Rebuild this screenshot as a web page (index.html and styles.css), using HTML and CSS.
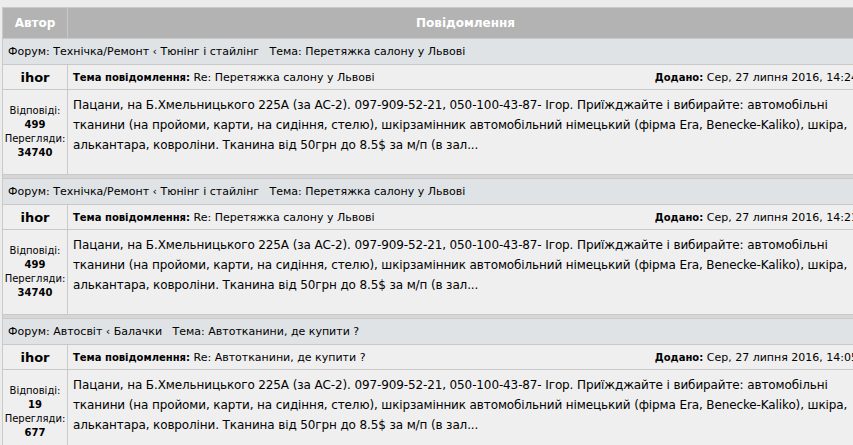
FILE: index.html
```html
<!DOCTYPE html>
<html lang="uk">
<head>
  <meta charset="UTF-8" />
  <title>Пошук</title>
  <link rel="stylesheet" href="styles.css">
</head>
<body>
  <table class="forumline">
    <thead>
      <tr>
        <th class="col-author">Автор</th>
        <th>Повідомлення</th>
      </tr>
    </thead>
    <tbody>
      <tr class="cat">
        <td colspan="2">Форум: Технічка/Ремонт &lsaquo; Тюнінг і стайлінг &nbsp; Тема: Перетяжка салону у Львові</td>
      </tr>
      <tr class="head-row">
        <td class="author">ihor</td>
        <td class="topic">
          <span class="subj"><b>Тема повідомлення:</b> Re: Перетяжка салону у Львові</span>
          <span class="date"><b>Додано:</b> Сер, 27 липня 2016, 14:24</span>
        </td>
      </tr>
      <tr class="body-row">
        <td class="stats">Відповіді:<br><b>499</b><br>Перегляди:<br><b>34740</b></td>
        <td class="message">Пацани, на Б.Хмельницького 225А (за АС-2). 097-909-52-21, 050-100-43-87- Ігор. Приїжджайте і вибирайте: автомобільні тканини (на пройоми, карти, на сидіння, стелю), шкірзамінник автомобільний німецький (фірма Era, Benecke-Kaliko), шкіра, алькантара, ковроліни. Тканина від 50грн до 8.5$ за м/п (в зал...</td>
      </tr>
      <tr class="space"><td colspan="2"></td></tr>

      <tr class="cat">
        <td colspan="2">Форум: Технічка/Ремонт &lsaquo; Тюнінг і стайлінг &nbsp; Тема: Перетяжка салону у Львові</td>
      </tr>
      <tr class="head-row">
        <td class="author">ihor</td>
        <td class="topic">
          <span class="subj"><b>Тема повідомлення:</b> Re: Перетяжка салону у Львові</span>
          <span class="date"><b>Додано:</b> Сер, 27 липня 2016, 14:21</span>
        </td>
      </tr>
      <tr class="body-row">
        <td class="stats">Відповіді:<br><b>499</b><br>Перегляди:<br><b>34740</b></td>
        <td class="message">Пацани, на Б.Хмельницького 225А (за АС-2). 097-909-52-21, 050-100-43-87- Ігор. Приїжджайте і вибирайте: автомобільні тканини (на пройоми, карти, на сидіння, стелю), шкірзамінник автомобільний німецький (фірма Era, Benecke-Kaliko), шкіра, алькантара, ковроліни. Тканина від 50грн до 8.5$ за м/п (в зал...</td>
      </tr>
      <tr class="space"><td colspan="2"></td></tr>

      <tr class="cat">
        <td colspan="2">Форум: Автосвіт &lsaquo; Балачки &nbsp; Тема: Автотканини, де купити ?</td>
      </tr>
      <tr class="head-row">
        <td class="author">ihor</td>
        <td class="topic">
          <span class="subj"><b>Тема повідомлення:</b> Re: Автотканини, де купити ?</span>
          <span class="date"><b>Додано:</b> Сер, 27 липня 2016, 14:05</span>
        </td>
      </tr>
      <tr class="body-row">
        <td class="stats">Відповіді:<br><b>19</b><br>Перегляди:<br><b>677</b></td>
        <td class="message">Пацани, на Б.Хмельницького 225А (за АС-2). 097-909-52-21, 050-100-43-87- Ігор. Приїжджайте і вибирайте: автомобільні тканини (на пройоми, карти, на сидіння, стелю), шкірзамінник автомобільний німецький (фірма Era, Benecke-Kaliko), шкіра, алькантара, ковроліни. Тканина від 50грн до 8.5$ за м/п (в зал...</td>
      </tr>
    </tbody>
  </table>
</body>
</html>
```

FILE: styles.css
```css
html, body {
  margin: 0;
  padding: 0;
}
body {
  background-color: #ececec;
  font-family: "DejaVu Sans", Verdana, sans-serif;
  color: #000;
  overflow: hidden;
  padding: 7px 0 0 3px;
}
.forumline {
  width: 862px;
  border-collapse: separate;
  border-spacing: 1px;
  background-color: #c9c9c9;
  border: 0;
  margin: 0 0 0 -1px;
}
.forumline th {
  background-color: #b3b3b3;
  color: #fff;
  font-size: 12px;
  font-weight: bold;
  height: 30px;
  padding: 0;
  text-align: center;
}
.col-author {
  width: 64px;
}
.cat td {
  background-color: #dfe3e6;
  font-size: 11px;
  height: 25px;
  padding: 0 5px;
  white-space: nowrap;
}
.head-row td {
  background-color: #efefef;
  height: 24px;
  padding: 0 5px;
}
.author {
  text-align: center;
  font-size: 13px;
  font-weight: bold;
}
.topic {
  font-size: 11px;
  display: flex;
  justify-content: space-between;
  align-items: center;
  white-space: nowrap;
}
.topic b {
  font-size: 10px;
}
.body-row td {
  background-color: #efefef;
  height: 76px;
}
.stats {
  text-align: center;
  font-size: 10px;
  line-height: 14px;
  padding: 0;
}
.message {
  font-size: 12px;
  line-height: 20px;
  letter-spacing: -0.12px;
  vertical-align: top;
  padding: 5px 5px 3px;
}
.space td {
  background-color: #d6d6d6;
  height: 3px;
  padding: 0;
}
```
